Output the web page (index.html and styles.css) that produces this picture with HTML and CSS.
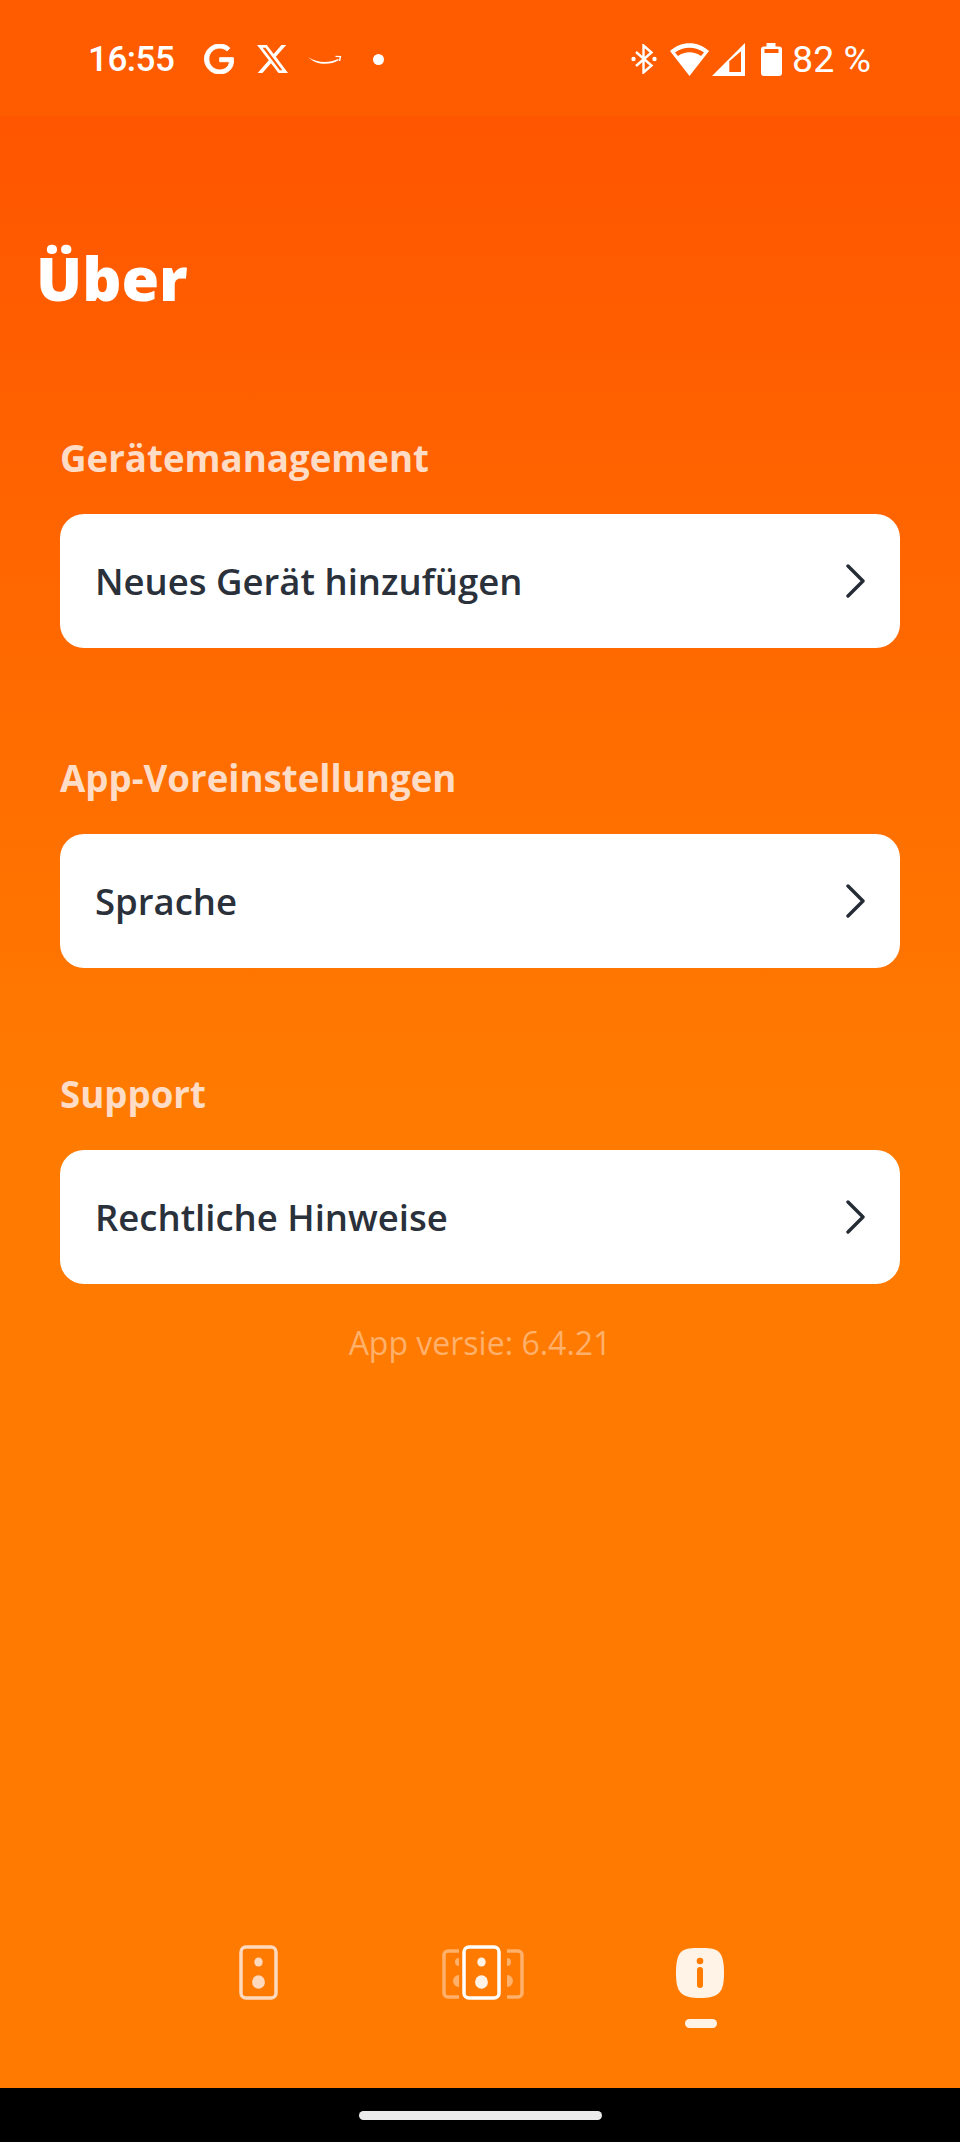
FILE: index.html
```html
<!doctype html>
<html lang="de">
<head>
	<meta charset="utf-8">
	<title>Über</title>
	<link rel="stylesheet" href="styles.css">
</head>
<body>
	<div class="screen">
		<div class="status">
			<div class="status-left">
				<span class="clock">16:55</span>
				<svg class="ic-g" width="30" height="30" viewBox="2 2 19.500 20"><path d="M21.35 11.1H12.18v2.73h6.51c-.33 3.810-3.500 5.440-6.500 5.440C8.360 19.270 5 16.250 5 12c0-4.100 3.200-7.270 7.200-7.270 3.090 0 4.900 1.970 4.900 1.970L19 4.720S16.560 2 12.100 2C6.420 2 2.030 6.800 2.030 12c0 5.050 4.130 10 10.220 10 5.350 0 9.250-3.670 9.250-9.090 0-1.150-.15-1.810-.15-1.810z" fill="#fff" stroke="#fff" stroke-width=".6"/></svg>
				<svg class="ic-x" width="31" height="30" viewBox="1.200 2.200 21.600 19.600"><path d="M18.244 2.250h3.308l-7.227 8.260 8.502 11.240H16.170l-5.214-6.817L4.990 21.750H1.680l7.730-8.835L1.254 2.250H8.080l4.713 6.231zm-1.161 17.520h1.833L7.084 4.126H5.117z" fill="#fff"/></svg>
				<svg class="ic-a" width="34" height="11" viewBox="0 0 34 11"><path d="M0 3c9 6 21 6.500 30 2l1 1C21 12 8 11 0 3z" fill="#fff"/><path d="M27.500 2.300l5 .2-1 4.500" fill="none" stroke="#fff" stroke-width="1.300"/></svg>
				<span class="dot"></span>
			</div>
			<div class="status-right">
				<svg class="ic-bt" width="26" height="30" viewBox="0 0 26 30"><path d="M5 8l15.500 13.500-8 7V1.500l8 7L5 22" fill="none" stroke="#fff" stroke-width="2.400"/><circle cx="2.500" cy="15" r="2.200" fill="#fff"/><circle cx="23.500" cy="15" r="2.200" fill="#fff"/></svg>
				<svg class="ic-wifi" width="39" height="33" viewBox="0 0 39 33"><path d="M19.500 33L0 8C11-2.500 28-2.500 39 8zM5 9.500l3 3.500c7-5 16-5 23 0l3-3.500C26 3 13 3 5 9.500z" fill="#fff" fill-rule="evenodd"/></svg>
				<svg class="ic-sig" width="33" height="33" viewBox="0 0 33 33"><path d="M0 33L33 0v33zM17.300 18.300V29H29V8.300z" fill="#fff" fill-rule="evenodd"/></svg>
				<svg class="ic-bat" width="21" height="33" viewBox="0 0 21 33"><path d="M5.500 0h9v3.500H18a3 3 0 0 1 3 3V30a3 3 0 0 1-3 3H3a3 3 0 0 1-3-3V6.500a3 3 0 0 1 3-3h2.500zM3.500 6v4h14V6z" fill="#fff" fill-rule="evenodd"/></svg>
				<span class="battery">82 %</span>
			</div>
		</div>

		<h1 class="title">Über</h1>

		<section class="group">
			<h2 class="group-label">Gerätemanagement</h2>
			<a class="row">
				<span>Neues Gerät hinzufügen</span>
				<svg class="chevron" width="20" height="34" viewBox="0 0 20 34"><path d="M3 2l15 15L3 32" fill="none" stroke="#252c36" stroke-width="3.400" stroke-linecap="round" stroke-linejoin="round"/></svg>
			</a>
		</section>

		<section class="group">
			<h2 class="group-label">App-Voreinstellungen</h2>
			<a class="row">
				<span>Sprache</span>
				<svg class="chevron" width="20" height="34" viewBox="0 0 20 34"><path d="M3 2l15 15L3 32" fill="none" stroke="#252c36" stroke-width="3.400" stroke-linecap="round" stroke-linejoin="round"/></svg>
			</a>
		</section>

		<section class="group">
			<h2 class="group-label">Support</h2>
			<a class="row">
				<span>Rechtliche Hinweise</span>
				<svg class="chevron" width="20" height="34" viewBox="0 0 20 34"><path d="M3 2l15 15L3 32" fill="none" stroke="#252c36" stroke-width="3.400" stroke-linecap="round" stroke-linejoin="round"/></svg>
			</a>
		</section>

		<p class="version">App versie: 6.4.21</p>

		<nav class="tabs">
			<div class="tab tab-one">
				<svg width="40" height="56" viewBox="0 0 40 56"><rect x="2" y="2" width="35" height="51" rx="5" fill="none" stroke="#ffd9bd" stroke-width="3.500"/><ellipse cx="19.500" cy="17" rx="4.200" ry="4.600" fill="#ffd9bd"/><ellipse cx="19.500" cy="37" rx="6.400" ry="6.800" fill="#ffd9bd"/></svg>
			</div>
			<div class="tab tab-two">
				<svg width="84" height="56" viewBox="0 0 84 56">
					<path d="M18 6H7a4 4 0 0 0-4 4v38a4 4 0 0 0 4 4h11M66 6h11a4 4 0 0 1 4 4v38a4 4 0 0 1-4 4H66" fill="none" stroke="#ffb06b" stroke-width="3.500"/>
					<path d="M18 13a4 4 0 0 0 0 8zM18 30a6 6 0 0 0 0 12zM66 13a4 4 0 0 1 0 8zM66 30a6 6 0 0 1 0 12z" fill="#ffb06b"/>
					<rect x="23" y="2" width="35" height="51" rx="5" fill="none" stroke="#fff" stroke-width="3.500"/>
					<ellipse cx="40.500" cy="17" rx="4.200" ry="4.600" fill="#fff3e8"/><ellipse cx="40.500" cy="37" rx="6.400" ry="6.800" fill="#fff3e8"/>
				</svg>
			</div>
			<div class="tab tab-three">
				<svg width="50" height="52" viewBox="0 0 50 52"><path d="M25 1c8 0 15 0 19 4s5 12 5 21-1 16-5 20-11 5-19 5-15-1-19-5-5-11-5-20S2 9 6 5s11-4 19-4z" fill="#fff3e8"/><circle cx="25" cy="14" r="3.300" fill="#ff7a00"/><rect x="22" y="20" width="6" height="21" rx="3" fill="#ff7a00"/></svg>
				<span class="tab-mark"></span>
			</div>
		</nav>

		<div class="navbar"><span class="home-pill"></span></div>
	</div>
</body>
</html>
```

FILE: styles.css
```css
* { box-sizing: border-box; }

html, body { margin: 0; padding: 0; }

body { font-family: "Open Sans", "Noto Sans", sans-serif; }

.screen {
	width: 960px;
	height: 2142px;
	display: flex;
	flex-direction: column;
	background: linear-gradient(180deg, #ff5500 110px, #ff7a00 1100px);
	overflow: hidden;
}

/* status bar */
.status {
	height: 116px;
	flex: none;
	padding: 2px 89px 0 88px;
	display: flex;
	align-items: center;
	justify-content: space-between;
	background: #ff5c00;
	color: #fff;
}
.status-left, .status-right { display: flex; align-items: center; }
.clock { font-family: Roboto, sans-serif; font-size: 35px; font-weight: 500; letter-spacing: -0.5px; margin-right: 30px; }
.ic-g { margin-right: 23px; }
.ic-x { margin-right: 20px; }
.ic-a { margin-right: 31px; }
.dot { width: 11px; height: 11px; border-radius: 50%; background: #fff; }
.ic-bt { margin-right: 13px; }
.ic-wifi { margin-right: 3px; }
.ic-sig { margin-right: 16px; }
.ic-bat { margin-right: 10px; }
.battery { font-family: Roboto, sans-serif; font-size: 37.5px; font-weight: 400; }

.title {
	margin: 138px 0 0 36px;
	font-size: 61px;
	line-height: 48px;
	font-weight: 800;
	color: #fff;
}

.group { margin: 0 60px; }
.group-label {
	margin: 0;
	font-size: 36.67px;
	line-height: 48px;
	font-weight: 700;
	color: #ffdcc6;
}
.row {
	height: 134px;
	margin-top: 32px;
	padding: 0 35px 0 35px;
	display: flex;
	align-items: center;
	justify-content: space-between;
	background: #fff;
	border-radius: 24px;
	font-size: 36.5px;
	font-weight: 600;
	color: #2a313b;
}

.group:nth-of-type(1) { margin-top: 132px; }
.group:nth-of-type(2) { margin-top: 106px; }
.group:nth-of-type(3) { margin-top: 102px; }

.version {
	margin: 37px 0 0;
	text-align: center;
	font-size: 32px;
	line-height: 44px;
	color: #ffb06b;
}

/* bottom tabs */
.tabs {
	margin-top: auto;
	height: 134px;
	flex: none;
	position: relative;
}
.tab { position: absolute; top: 0; display: flex; flex-direction: column; align-items: center; }
.tab-one { left: 239px; }
.tab-two { left: 441px; }
.tab-three { left: 675px; top: 2px; }
.tab-mark { width: 32px; height: 9px; margin-top: 20px; margin-left: 2px; border-radius: 5px; background: #fff3e8; }

.navbar {
	height: 54px;
	flex: none;
	margin-top: 9px;
	display: flex;
	justify-content: center;
	align-items: center;
	background: #000;
}
.home-pill { width: 243px; height: 9px; border-radius: 5px; background: #ebebeb; }
```
